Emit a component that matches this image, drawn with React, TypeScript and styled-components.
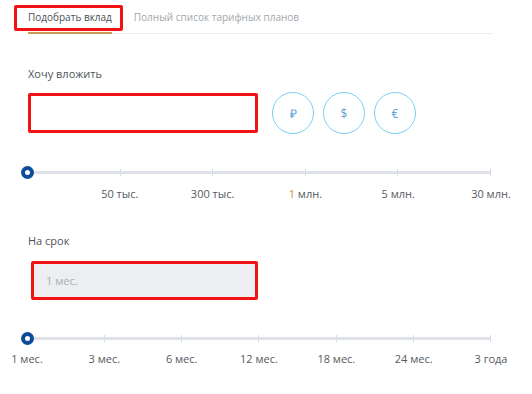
import styled, { createGlobalStyle } from 'styled-components';

const GlobalStyle = createGlobalStyle`
    body {
        margin: 0;
        background: #ffffff;
        font-family: 'Open Sans', 'Liberation Sans', sans-serif;
        color: #555a60;
    }
`;

const amountMarks = ['', '50 тыс.', '300 тыс.', '1 млн.', '5 млн.', '30 млн.'];
const termMarks = ['1 мес.', '3 мес.', '6 мес.', '12 мес.', '18 мес.', '24 мес.', '3 года'];
const currencies = ['₽', '$', '€'];

const Slider = ({ marks, labelGap }: { marks: string[]; labelGap: number }) => (
    <SliderWrap>
        <Track>
            {marks.map((_, i) => (
                <Tick key={i} $first={i === 0} />
            ))}
            <Thumb />
        </Track>
        <Labels style={{ marginTop: labelGap }}>
            {marks.map((m, i) => (
                <Label key={i}>
                    <span>
                        {m === '1 млн.' ? (
                            <>
                                <Gold>1</Gold> млн.
                            </>
                        ) : (
                            m
                        )}
                    </span>
                </Label>
            ))}
        </Labels>
    </SliderWrap>
);

const App = () => {
    return (
        <Page>
            <GlobalStyle />
            <TabBar>
                <Tab $active>
                    Подобрать вклад
                    <Marker />
                </Tab>
                <Tab>Полный список тарифных планов</Tab>
            </TabBar>

            <Section $top={32}>
                <FieldLabel>Хочу вложить</FieldLabel>
                <InputRow>
                    <AmountInput />
                    <Currencies>
                        {currencies.map(c => (
                            <Currency key={c}>{c}</Currency>
                        ))}
                    </Currencies>
                </InputRow>
                <Slider marks={amountMarks} labelGap={12} />
            </Section>

            <Section $top={32}>
                <FieldLabel>На срок</FieldLabel>
                <TermInput>1 мес.</TermInput>
                <Slider marks={termMarks} labelGap={11} />
            </Section>
        </Page>
    );
};

const Page = styled.div`
    width: 532px;
    height: 394px;
    padding-left: 28px;
    box-sizing: border-box;
    overflow: hidden;
`;

const TabBar = styled.div`
    display: flex;
    gap: 22px;
    width: 464px;
    border-bottom: 1px solid #e9eaec;
`;

const Tab = styled.div<{ $active?: boolean }>`
    position: relative;
    padding: 10px 0 7px;
    font-size: 10px;
    line-height: 15px;
    color: ${p => (p.$active ? '#4a4f55' : '#a3a7ab')};
    border-bottom: ${p => (p.$active ? '2px solid #c99a55' : '2px solid transparent')};
    margin-bottom: -1px;
`;

const Marker = styled.span`
    position: absolute;
    left: -14px;
    right: -11px;
    top: 5px;
    bottom: 1px;
    border: 3px solid #f21212;
    border-radius: 2px;
`;

const Section = styled.div<{ $top: number }>`
    margin-top: ${p => p.$top}px;
`;

const FieldLabel = styled.div`
    font-size: 11px;
    line-height: 15px;
    color: #4f545a;
`;

const InputRow = styled.div`
    display: flex;
    align-items: center;
    gap: 14px;
    margin-top: 11px;
`;

const AmountInput = styled.div`
    width: 230px;
    height: 40px;
    box-sizing: border-box;
    border: 3px solid #f21212;
    border-radius: 2px;
    background: #ffffff;
`;

const Currencies = styled.div`
    display: flex;
    gap: 9px;
`;

const Currency = styled.div`
    width: 42px;
    height: 42px;
    box-sizing: border-box;
    border: 1px solid #7ccdf3;
    border-radius: 50%;
    display: flex;
    align-items: center;
    justify-content: center;
    font-size: 12px;
    color: #5d9fd6;
`;

const TermInput = styled.div`
    width: 227px;
    height: 39px;
    margin: 13px 0 0 3px;
    box-sizing: border-box;
    border: 3px solid #f21212;
    border-radius: 2px;
    background: #eceef1;
    display: flex;
    align-items: center;
    padding-left: 12px;
    font-size: 11px;
    color: #a9adb2;
`;

const SliderWrap = styled.div`
    width: 464px;
    margin-top: 37px;
    margin-left: -1px;
`;

const Track = styled.div`
    position: relative;
    height: 3px;
    background: #dfe3e9;
    display: flex;
    justify-content: space-between;
    align-items: center;
`;

const Tick = styled.span<{ $first?: boolean }>`
    width: 1px;
    height: 7px;
    background: ${p => (p.$first ? 'transparent' : '#d7dce3')};
`;

const Thumb = styled.span`
    position: absolute;
    left: -6px;
    top: -5px;
    width: 13px;
    height: 13px;
    box-sizing: border-box;
    border: 4px solid #0d4c98;
    border-radius: 50%;
    background: #ffffff;
`;

const Labels = styled.div`
    display: flex;
    justify-content: space-between;
`;

const Label = styled.span`
    width: 0;
    display: flex;
    justify-content: center;
    white-space: nowrap;
    font-size: 11px;
    line-height: 15px;
    color: #555a60;
`;

const Gold = styled.span`
    color: #c39244;
`;

export default App;
